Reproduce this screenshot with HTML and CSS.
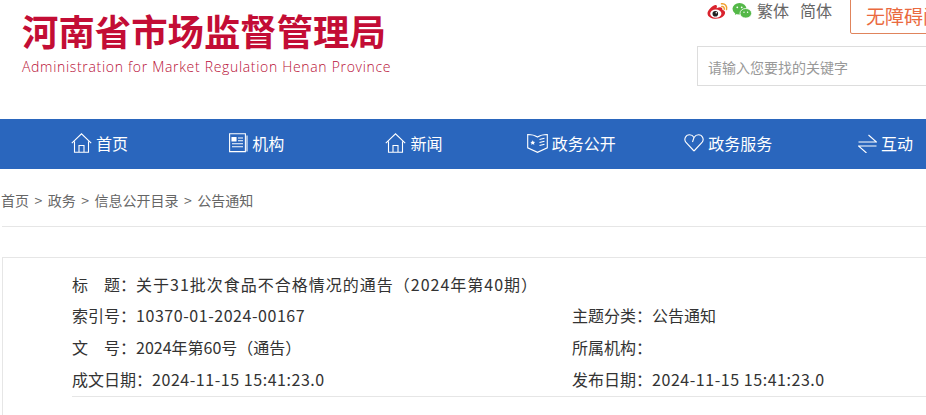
FILE: index.html
```html
<!DOCTYPE html>
<html>
<head>
    <meta charset="UTF-8">
    <title>河南省市场监督管理局</title>
    <link rel="stylesheet" href="styles.css">
</head>
<body>
    <div id="page">
        <div id="header-container">
            <div class="logo">
                <div class="logo-cn">河南省市场监督管理局</div>
                <div class="logo-en">Administration for Market Regulation Henan Province</div>
            </div>
            <div class="header-right">
                <div class="tools">
                    <svg class="tool-icon weibo" width="26" height="20" viewBox="0 0 26 20">
                        <path d="M10.500 7.200c3.600-1.600 6.300-1 5.900 1.600.3.100 2.700.8 2.700 3 0 3-4.200 6-9.300 6C5.300 17.800 1.500 15.500 1.500 12.400c0-2.800 4.300-7.500 7.700-8.300 1.900-.3 2.200 1.400 1.300 3.100z" fill="#d9232e"/>
                        <ellipse cx="9.800" cy="12.700" rx="5.600" ry="4.100" fill="#fff"/>
                        <circle cx="9.300" cy="12.800" r="2.800" fill="#222"/>
                        <circle cx="10.300" cy="11.800" r=".8" fill="#fff"/>
                        <path d="M15.500 2.800c3.500-.6 6 2.300 5 5.700M15.800 5.600c1.700-.3 2.800 1 2.400 2.600" fill="none" stroke="#f0a030" stroke-width="1.500" stroke-linecap="round"/>
                    </svg>
                    <svg class="tool-icon" width="20" height="20" viewBox="0 0 20 20">
                        <ellipse cx="7.500" cy="7.800" rx="7" ry="5.800" fill="#54b848"/>
                        <path d="M3.500 11l-.6 3 3-1.700z" fill="#54b848"/>
                        <ellipse cx="13.800" cy="12.300" rx="5.800" ry="4.800" fill="#54b848" stroke="#fff" stroke-width=".8"/>
                        <circle cx="5.300" cy="6.300" r=".9" fill="#fff"/>
                        <circle cx="9.700" cy="6.300" r=".9" fill="#fff"/>
                        <circle cx="12" cy="11.300" r=".7" fill="#fff"/>
                        <circle cx="15.600" cy="11.300" r=".7" fill="#fff"/>
                    </svg>
                    <span class="lang">繁体</span>
                    <span class="lang lang-next">简体</span>
                    <span class="access-btn">无障碍阅读</span>
                </div>
                <div class="search-box">请输入您要找的关键字</div>
            </div>
        </div>

        <div id="nav-container">
            <a class="nav-item">
                <svg width="21" height="20" viewBox="0 0 21 20" fill="none" stroke="#fff" stroke-width="1.100"><path d="M.8 10.200L10.500 .8l9.700 9.400M3.500 8.500v10.700h14V8.500M8 19v-6.500h5V19"/></svg>
                首页
            </a>
            <a class="nav-item">
                <svg width="19" height="20" viewBox="0 0 19 20" fill="none" stroke="#fff" stroke-width="1.100"><path d="M.6.800h15.800v17.800H.6zM18 2.500v16"/><path d="M3 4.500h4v3.500H3z" fill="#fff"/><path d="M9 5h5M9 7.800h5M3 10.800h11M3 13.800h11"/></svg>
                机构
            </a>
            <a class="nav-item">
                <svg width="21" height="20" viewBox="0 0 21 20" fill="none" stroke="#fff" stroke-width="1.100"><path d="M.8 10.200L10.500 .8l9.700 9.400M3.500 8.500v10.700h14V8.500M8 19v-6.500h5V19"/></svg>
                新闻
            </a>
            <a class="nav-item">
                <svg width="21" height="20" viewBox="0 0 21 20" fill="none" stroke="#fff" stroke-width="1.100"><path d="M.7 1.500c3.500 0 7 .6 9.800 2.500 2.800-1.900 6.300-2.500 9.800-2.500v13.300l-9.800 4.500L.7 14.800z"/><path d="M5.700 7.200l.8 1.500 1.700.2-1.200 1.200.3 1.700-1.600-.8-1.500.8.300-1.700-1.200-1.200 1.700-.2z" fill="#fff" stroke="none"/><path d="M12.500 6.500l5-1.200M12.500 9.500l5-1.200M12.500 12.500l5-1.200"/></svg>
                政务公开
            </a>
            <a class="nav-item">
                <svg width="20" height="20" viewBox="0 0 20 20" fill="none" stroke="#fff" stroke-width="1.100"><path d="M10 18L2 9.500C-.5 6.500 1.500 1.800 5.500 1.800c2 0 3.500 1 4.500 2.700"/><path d="M10 18l8-8.500c2.500-3 .5-7.700-3.500-7.700-1.700 0-3.300.8-4.500 2.700L8.500 9"/></svg>
                政务服务
            </a>
            <a class="nav-item">
                <svg width="19" height="20" viewBox="0 0 19 20" fill="none" stroke="#fff" stroke-width="1.100"><path d="M.5 9h18L10.500 2M18.500 13H.5l8 7"/></svg>
                互动
            </a>
        </div>

        <div class="breadcrumb">首页<span class="sep">&gt;</span>政务<span class="sep">&gt;</span>信息公开目录<span class="sep">&gt;</span>公告通知</div>

        <div class="doc-card">
            <div class="doc-row doc-title"><span class="doc-label">标　题：</span><span class="title-value">关于31批次食品不合格情况的通告（2024年第40期）</span></div>
            <div class="doc-grid">
                <div class="doc-row"><span class="doc-label">索引号：</span><span class="num">10370-01-2024-00167</span></div>
                <div class="doc-row">主题分类：公告通知</div>
                <div class="doc-row"><span class="doc-label">文　号：</span>2024年第60号（通告）</div>
                <div class="doc-row">所属机构：</div>
                <div class="doc-row">成文日期：<span class="num">2024-11-15 15:41:23.0</span></div>
                <div class="doc-row">发布日期：<span class="num">2024-11-15 15:41:23.0</span></div>
            </div>
        </div>
    </div>
</body>
</html>
```

FILE: styles.css
```css
html, body {
    margin: 0;
    padding: 0;
    background-color: #fff;
}

#page {
    width: 926px;
    height: 415px;
    overflow: hidden;
    font-family: "Noto Sans CJK SC", "Noto Sans", sans-serif;
    color: #333;
}

#header-container {
    display: flex;
    justify-content: space-between;
    height: 119px;
    padding-left: 22px;
}

.logo-cn {
    margin-top: 7px;
    font-size: 36.400px;
    line-height: 46px;
    font-weight: 700;
    color: #c30d35;
    white-space: nowrap;
}

.logo-en {
    margin-top: 4px;
    font-family: "Open Sans", sans-serif;
    font-size: 14px;
    font-weight: 300;
    line-height: 20px;
    letter-spacing: .68px;
    color: #b80f36;
    white-space: nowrap;
}

.header-right {
    width: 229px;
    flex: none;
}

.tools {
    display: flex;
    align-items: flex-start;
    height: 46px;
}

.tool-icon {
    flex: none;
    margin-top: 1px;
}

.weibo {
    margin-left: 9px;
}

.lang {
    flex: none;
    margin-left: 5px;
    font-size: 16px;
    line-height: 20px;
    color: #666;
}

.lang-next {
    margin-left: 11px;
}

.access-btn {
    flex: none;
    margin-left: 18px;
    margin-top: -6px;
    width: 120px;
    height: 38px;
    padding-left: 15px;
    border: 1px solid #e0845c;
    border-radius: 2px;
    font-size: 19px;
    line-height: 42px;
    color: #ea6a3f;
    white-space: nowrap;
}

.search-box {
    width: 260px;
    height: 38px;
    padding-left: 10px;
    border: 1px solid #ddd;
    font-size: 14px;
    line-height: 40px;
    color: #999;
}

#nav-container {
    display: grid;
    grid-template-columns: repeat(6, 157.200px);
    height: 50px;
    padding-left: 21px;
    background-color: #2a66bd;
}

.nav-item {
    display: flex;
    justify-content: center;
    align-items: center;
    gap: 4px;
    padding-bottom: 2px;
    font-size: 16px;
    color: #fff;
    white-space: nowrap;
}

.breadcrumb {
    margin-left: 2px;
    padding: 22px 0 16px;
    border-bottom: 1px solid #e6e6e6;
    font-size: 14px;
    line-height: 19px;
    text-indent: -1px;
    color: #666;
}

.sep {
    margin: 0 5.500px;
}

.doc-card {
    margin: 30px 0 0 2px;
    width: 1000px;
    height: 200px;
    padding: 10px 0 0 69px;
    border: 1px solid #e6e6e6;
}

.doc-row {
    font-size: 16px;
    line-height: 32px;
    color: #333;
    white-space: nowrap;
}

.doc-title {
    margin-bottom: -1px;
}

.title-value {
    letter-spacing: 1px;
}

.num {
    letter-spacing: .55px;
}

.doc-grid {
    display: grid;
    grid-template-columns: 500px 355px;
    width: 855px;
    padding-bottom: 1px;
    border-bottom: 1px solid #e6e6e6;
}
```
